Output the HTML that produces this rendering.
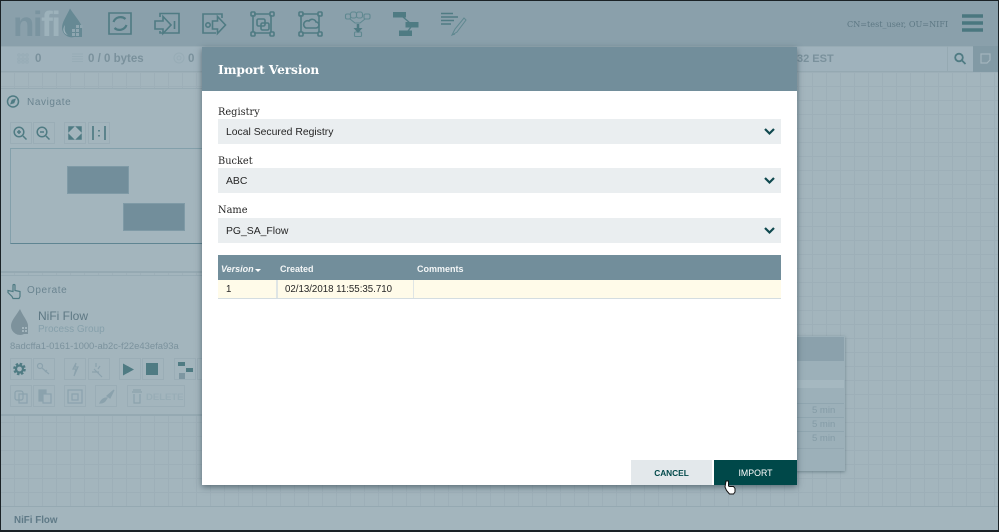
<!DOCTYPE html>
<html><head><meta charset="utf-8"><style>
html,body{margin:0;padding:0;background:#111}
#r{position:relative;width:999px;height:532px;overflow:hidden;background:#a3b5bd;font-family:"Liberation Sans",sans-serif}
#r div{position:absolute;box-sizing:border-box;white-space:nowrap}
.grid{background-color:#a3b5bd;background-image:linear-gradient(#9dafb8 1px,transparent 1px),linear-gradient(90deg,#9dafb8 1px,transparent 1px);background-size:14px 14px}
.lb{left:218px;font-family:"DejaVu Serif",serif;font-size:9.8px;color:#262626}
.sel{left:218px;width:563px;height:25px;background:#eaeef0;color:#262626;font-size:10.4px;line-height:27px;padding-left:8px}
.th{top:255px;height:25px;line-height:28px;color:#fff;font-size:9px;font-weight:bold;opacity:.92}
.tb{width:22px;height:22px;border:1px solid #9aadb6}
.st{top:52.500px;font-size:11.500px;font-weight:bold;color:#7a919c}
svg{position:absolute;left:0;top:0}
</style></head><body><div id="r">
<div style="left:0;top:1px;width:999px;height:45px;background:#8aa0ab"></div>
<div style="left:0;top:46px;width:999px;height:26px;background:#9fb2bc;border-top:1px solid #97abb4;border-bottom:1px solid #95a9b2"></div>
<div class="grid" style="left:0;top:72px;width:999px;height:434px"></div>
<div style="left:0;top:506px;width:999px;height:24px;background:#a3b5bd;border-top:1px solid #95a9b2"></div>
<div style="left:14px;top:515px;font-size:9.800px;font-weight:bold;color:#5f7a87">NiFi Flow</div>

<div style="left:13px;top:5px;font:bold 35px 'Liberation Sans',sans-serif;letter-spacing:-1.500px;color:#7a94a0">ni<span style="color:#9db2bb">fi</span></div>
<div style="left:847px;top:18.500px;font-family:'DejaVu Serif',serif;font-size:8.100px;color:#5d7884">CN=test_user, OU=NIFI</div>

<svg width="999" height="532" fill="none" stroke="#4f7b83" stroke-width="1.600">
<path d="M70 8.500C66 17 62 22 62 28a9.500 9.500 0 0 0 12 9h8V27C80 21 74 15 70 8.500Z" fill="#668994" stroke="none"/>
<path d="M65 25c-1 5 0 8 3 10-5-1-6-6-3-10z" fill="#9cb1ba" stroke="none"/>
<g fill="#8fa6b0" stroke="none"><rect x="72" y="29" width="3" height="3"/><rect x="76" y="29" width="3" height="3"/><rect x="80" y="25" width="2.500" height="3"/><rect x="76" y="25" width="3" height="3"/><rect x="72" y="33" width="3" height="3"/><rect x="76" y="33" width="3" height="3"/></g>
<path d="M109 13h22v21h-22z" /><path d="M125.500 19a7.500 7.500 0 0 0-12 3M114.500 28a7.500 7.500 0 0 0 12-3" stroke-width="2.200"/>
<path d="M160 17v-3.500h19V33h-19v-2"/><path d="M155 21h8v-4.500l8 8.500-8 8.500V29h-8z"/><path d="M174.500 21v8"/>
<path d="M216 14h-13v19h13M222 18v-4h-6"/><path d="M212.500 21h5v-4.500l8 8.500-8 8.500V29h-5z"/><circle cx="208" cy="25" r="2.200"/>
<path d="M254 14h16M254 33h16M253 15v17M271 15v17"/><rect x="251" y="12" width="4" height="4" rx="1"/><rect x="270" y="12" width="4" height="4" rx="1"/><rect x="251" y="32" width="4" height="4" rx="1"/><rect x="270" y="32" width="4" height="4" rx="1"/><rect x="257" y="19" width="8" height="7" rx="1.500"/><rect x="261" y="23" width="8" height="7" rx="1.500"/>
<path d="M302 14h16M302 33h16M301 15v17M319 15v17"/><rect x="299" y="12" width="4" height="4" rx="1"/><rect x="318" y="12" width="4" height="4" rx="1"/><rect x="299" y="32" width="4" height="4" rx="1"/><rect x="318" y="32" width="4" height="4" rx="1"/><path d="M306 28h10a3 3 0 0 0 0-6 4 4 0 0 0-7-1 3.500 3.500 0 0 0-3 7z"/>
<g stroke-width="1.100" stroke="#5f8890"><rect x="345.500" y="14" width="5" height="5" rx="1.500"/><rect x="350.500" y="12" width="6" height="6" rx="2"/><rect x="356.500" y="12" width="6" height="6" rx="2"/><rect x="364" y="14" width="6" height="5" rx="1.500"/><path d="M350 19l5 4h5l5-4"/><rect x="354.500" y="32" width="7" height="4.500" rx="1"/></g><path d="M358 24v6" stroke-width="2.500"/><path d="M353.500 28h9l-4.500 5z" fill="#4f7b83" stroke="none"/>
<g fill="#4f7b83" stroke="none"><rect x="393" y="12" width="13" height="5.500"/><rect x="405.500" y="22" width="13" height="5.500"/><rect x="399" y="30.500" width="13" height="5.500"/></g><path d="M403 17l7 6M411 27l-3 4" stroke-width="1.300"/>
<path d="M441 13.500h12M441 17h17M441 20.500h13M441 24h10" stroke-width="1.500"/><path d="M452 35l3-6 9-11 2 2-9 12zM452 35l3-1" stroke-width="1" stroke="#5f8890"/>
<path d="M962 16h21M962 23h21M962 30h21" stroke-width="3.500" stroke="#4a777f"/>
<g stroke="#97acb6" stroke-width="1"><circle cx="19" cy="55" r="1.300"/><circle cx="23" cy="55" r="1.300"/><circle cx="27" cy="55" r="1.300"/><circle cx="19" cy="59" r="1.300"/><circle cx="23" cy="59" r="1.300"/><circle cx="27" cy="59" r="1.300"/><circle cx="19" cy="62" r="1.300"/><circle cx="23" cy="62" r="1.300"/><circle cx="27" cy="62" r="1.300"/><path d="M72 54h11M72 56.500h11M72 59h11M72 61.500h11"/><circle cx="179" cy="58" r="5"/><circle cx="179" cy="58" r="2"/></g>
</svg>
<div class="st" style="left:35px">0</div>
<div class="st" style="left:88px">0 / 0 bytes</div>
<div class="st" style="left:188px">0</div>
<div class="st" style="left:797px;font-size:11px;top:53px">32 EST</div>
<div style="left:947px;top:46px;width:26px;height:26px;border-left:1px solid #95a9b2"></div>
<div style="left:973px;top:46px;width:26px;height:26px;background:#829aa5"></div>
<svg width="999" height="532" fill="none" stroke="#4f7b83" stroke-width="1.800">
<circle cx="959" cy="57.500" r="3.800"/><path d="M962 60.500l3.500 3.500"/>
<path d="M981 54h9v6l-3 3h-6z" stroke="#a3b5bd" stroke-width="1.200"/>
</svg>

<!-- process group behind -->
<div style="left:790px;top:336px;width:55px;height:135px;background:#9cb0b9;box-shadow:0 1px 3px rgba(60,85,95,.5)"></div>
<div style="left:790px;top:337px;width:54px;height:24px;background:#8ba1ac"></div>
<div style="left:790px;top:380px;width:54px;height:8px;background:#a5b8c0"></div>
<div style="left:790px;top:403px;width:54px;height:1px;background:#90a6b0"></div>
<div style="left:790px;top:417px;width:54px;height:1px;background:#90a6b0"></div>
<div style="left:790px;top:431px;width:54px;height:1px;background:#90a6b0"></div>
<div style="left:790px;top:448px;width:54px;height:1px;background:#94a8b2"></div>
<div style="left:812px;top:405px;font-size:9.500px;color:#849ba6">5 min</div>
<div style="left:812px;top:419px;font-size:9.500px;color:#849ba6">5 min</div>
<div style="left:812px;top:433px;font-size:9.500px;color:#849ba6">5 min</div>

<!-- navigate -->
<div style="left:1px;top:88px;width:203px;height:185px;background:#a3b5bd;border-top:1px solid #97abb4;border-bottom:2px solid #95a9b2"></div>
<div style="left:27px;top:96.500px;font-size:10px;letter-spacing:.6px;color:#6a8490">Navigate</div>
<div class="tb" style="left:10px;top:122px"></div><div class="tb" style="left:33px;top:122px"></div><div class="tb" style="left:64px;top:122px"></div><div class="tb" style="left:88px;top:122px"></div>
<div style="left:10px;top:148px;width:195px;height:96px;border:1px solid #83a0ab;border-bottom:1px solid #5f8592"></div>
<div style="left:67px;top:166px;width:62px;height:28px;background:#728e9b;border:1px solid #7f9aa6"></div>
<div style="left:123px;top:203px;width:62px;height:28px;background:#728e9b;border:1px solid #7f9aa6"></div>
<!-- operate -->
<div style="left:1px;top:275px;width:203px;height:141px;background:#a3b5bd;border-top:1px solid #97abb4;border-bottom:2px solid #95a9b2"></div>
<div style="left:27px;top:284.500px;font-size:10px;letter-spacing:.6px;color:#6a8490">Operate</div>
<div style="left:38px;top:309px;font-size:12px;color:#5e7884">NiFi Flow</div>
<div style="left:38px;top:323.500px;font-size:10px;color:#86a0ab">Process Group</div>
<div style="left:10px;top:341px;font-size:9.450px;color:#7b929d">8adcffa1-0161-1000-ab2c-f22e43efa93a</div>
<div class="tb" style="left:10px;top:358px"></div><div class="tb" style="left:33px;top:358px"></div><div class="tb" style="left:64px;top:358px"></div><div class="tb" style="left:88px;top:358px"></div><div class="tb" style="left:119px;top:358px"></div><div class="tb" style="left:142px;top:358px"></div><div class="tb" style="left:174px;top:358px"></div><div class="tb" style="left:197px;top:358px"></div>
<div class="tb" style="left:10px;top:385px"></div><div class="tb" style="left:33px;top:385px"></div><div class="tb" style="left:64px;top:385px"></div><div class="tb" style="left:95px;top:385px"></div>
<div class="tb" style="left:127px;top:385px;width:58px"></div>
<div style="left:146px;top:392px;font-size:9.500px;font-weight:bold;color:#98adb6">DELETE</div>
<svg width="999" height="532" fill="none" stroke="#4f7b83" stroke-width="1.500">
<circle cx="13" cy="101.500" r="5.500"/><path d="M15.500 99l-1.500 4-3.500 1 1.500-4z" fill="#4f7b83" stroke-width=".6"/>
<circle cx="19" cy="132" r="4.800"/><path d="M23 136l3.500 3.500M17 132h4M19 130v4"/>
<circle cx="42" cy="132" r="4.800"/><path d="M46 136l3.500 3.500M40 132h4"/>
<path d="M69 127h4l-4 4zM81 127h-4l4 4zM69 139h4l-4-4zM81 139h-4l4-4z" fill="#4f7b83"/>
<path d="M93 126v14M105 126v14M99 130v1.500M99 135v1.500" stroke-width="1.700"/>
<path d="M13 285.500v6l-5-1v2l4 4 1 2h6l1-2v-5l-5-1v-5a1 1 0 0 0-2 0z" stroke-width="1.200"/>
<path d="M20 309c-5 8-9 12-9 17a9 9 0 0 0 13 8h4v-9c-1-5-5-9-8-16z" fill="#7d929c" stroke="none"/>
<g fill="#a3b5bd" stroke="none"><rect x="22" y="327" width="2" height="2"/><rect x="25" y="327" width="2" height="2"/><rect x="22" y="330" width="2" height="2"/><rect x="25" y="330" width="2" height="2"/></g>
<circle cx="19.500" cy="369" r="5.200" stroke-width="2.200" stroke-dasharray="2.400 1.700"/><circle cx="19.500" cy="369" r="3.500" stroke-width="2.200"/>
<path d="M123 363.500v12l11-6z" fill="#4f7b83" stroke="none"/><rect x="146" y="363" width="12" height="12" fill="#4f7b83" stroke="none"/>
<g stroke="#8ba2ad" stroke-width="1.200"><circle cx="40" cy="366" r="2.500"/><path d="M42 368l7 6M47 370l-2 2M76 363l-3 6h3l-2 7 4-9h-3zM96 363v4M94 369l8 8M92 372h7M100 366l-2 3"/><rect x="15" y="391" width="8" height="9" rx="2"/><rect x="19" y="394" width="8" height="9"/><rect x="39" y="390" width="7" height="11" fill="#8ba2ad"/><rect x="43" y="394" width="8" height="9" fill="#a3b5bd"/><rect x="68" y="390" width="14" height="13"/><rect x="72" y="394" width="6" height="6"/><path d="M107 396l7-6-4 8z" fill="#8ba2ad"/><path d="M100 403c3 0 5-1 7-5-3 0-5 1-7 5z" fill="#8ba2ad"/><path d="M133 390h8M132 392h10M134 394v9h6v-9"/></g>
<g fill="#4f7b83" stroke="none"><rect x="178" y="362" width="7" height="4"/><rect x="186" y="368" width="7" height="4"/></g><g fill="#7d96a1" stroke="none"><rect x="179" y="373" width="6" height="6"/></g>
</svg>

<!-- dialog -->
<div style="left:202px;top:47px;width:595px;height:438px;background:#fff;box-shadow:0 2px 6px rgba(30,50,60,.55)"></div>
<div style="left:202px;top:47px;width:595px;height:44px;background:#728e9b"></div>
<div style="left:218px;top:63px;font-family:'DejaVu Serif',serif;font-weight:bold;font-size:12.200px;letter-spacing:-.1px;color:#fff">Import Version</div>
<div class="lb" style="top:106.500px">Registry</div>
<div class="sel" style="top:119px">Local Secured Registry</div>
<div class="lb" style="top:155.500px">Bucket</div>
<div class="sel" style="top:168px">ABC</div>
<div class="lb" style="top:205px">Name</div>
<div class="sel" style="top:218px">PG_SA_Flow</div>
<svg width="999" height="532" fill="none" stroke="#10494f" stroke-width="2.200">
<path d="M765 129l4.500 4.500 4.500-4.500M765 178l4.500 4.500 4.500-4.500M765 228l4.500 4.500 4.500-4.500"/>
</svg>
<div style="left:218px;top:255px;width:563px;height:25px;background:#728e9b"></div>
<div class="th" style="left:221px;font-style:italic">Version</div>
<div style="left:255px;top:269px;width:0;height:0;border:3px solid transparent;border-top:3px solid #fff;border-bottom:0"></div>
<div class="th" style="left:280px">Created</div>
<div class="th" style="left:417px">Comments</div>
<div style="left:218px;top:280px;width:563px;height:19px;background:#fffbe9;border-bottom:1px solid #d4dde1"></div>
<div style="left:276px;top:280px;width:2px;height:18px;background:#dfe5e5"></div>
<div style="left:413px;top:280px;width:1px;height:18px;background:#dfe5e5"></div>
<div style="left:226px;top:284px;font-size:9.700px;color:#262626">1</div>
<div style="left:285px;top:284px;font-size:9.700px;color:#262626">02/13/2018 11:55:35.710</div>
<div style="left:631px;top:460px;width:81px;height:25px;background:#e3e8eb;color:#004849;font-size:8.300px;font-weight:bold;text-align:center;line-height:27px">CANCEL</div>
<div style="left:714px;top:460px;width:83px;height:25px;background:#004849;color:#fff;font-size:8.800px;text-align:center;line-height:27px">IMPORT</div>
<svg width="999" height="532"><path d="M726 481h2.500v5l1 .5h4l1.500 2v3.500l-1.500 2h-4l-3-3.500-1.500-3.500z" fill="#fff" stroke="#111" stroke-width="1"/></svg>

<div style="left:0;top:0;width:999px;height:1px;background:#1a2226"></div>
<div style="left:0;top:0;width:1px;height:532px;background:#1a2226"></div>
<div style="left:998px;top:0;width:1px;height:532px;background:#1a2226"></div>
<div style="left:0;top:530px;width:999px;height:2px;background:#1a2226"></div>
</div></body></html>
